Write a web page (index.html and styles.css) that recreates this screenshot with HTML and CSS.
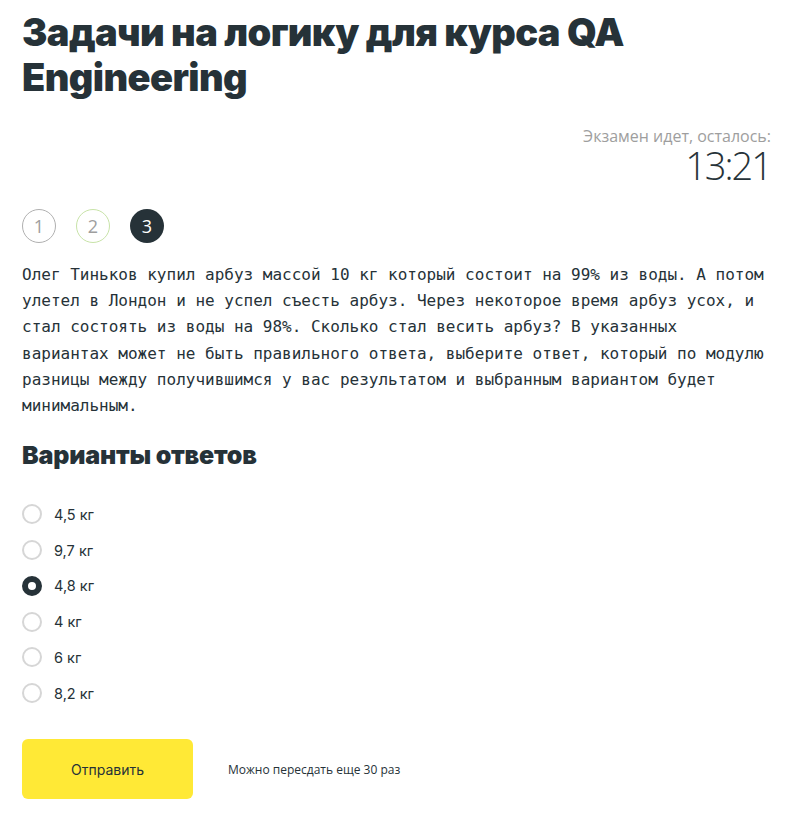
FILE: index.html
```html
<!DOCTYPE html>
<html lang="ru">
<head>
<meta charset="utf-8">
<title>Задачи на логику</title>
<link rel="stylesheet" href="styles.css">
</head>
<body>
<div class="page">
  <h1 class="title">Задачи на логику для курса QA Engineering</h1>
  <div class="timer">
    <div class="timer-label">Экзамен идет, осталось:</div>
    <div class="timer-value">13:21</div>
  </div>
  <div class="steps">
    <span class="step step-done">1</span>
    <span class="step step-ok">2</span>
    <span class="step step-current">3</span>
  </div>
  <p class="question">Олег Тиньков купил арбуз массой 10 кг который состоит на 99% из воды. А потом улетел в Лондон и не успел съесть арбуз. Через некоторое время арбуз усох, и стал состоять из воды на 98%. Сколько стал весить арбуз? В указанных вариантах может не быть правильного ответа, выберите ответ, который по модулю разницы между получившимся у вас результатом и выбранным вариантом будет минимальным.</p>
  <h2 class="subtitle">Варианты ответов</h2>
  <ul class="options">
    <li class="option"><span class="radio"></span><span class="option-text">4,5 кг</span></li>
    <li class="option"><span class="radio"></span><span class="option-text">9,7 кг</span></li>
    <li class="option"><span class="radio radio-checked"></span><span class="option-text">4,8 кг</span></li>
    <li class="option"><span class="radio"></span><span class="option-text">4 кг</span></li>
    <li class="option"><span class="radio"></span><span class="option-text">6 кг</span></li>
    <li class="option"><span class="radio"></span><span class="option-text">8,2 кг</span></li>
  </ul>
  <div class="actions">
    <button class="submit" type="button">Отправить</button>
    <span class="attempts">Можно пересдать еще 30 раз</span>
  </div>
</div>
</body>
</html>
```

FILE: styles.css
```css
* { box-sizing: border-box; }
html, body { margin: 0; padding: 0; background: #fff; }
body { color: #263238; font-family: "Open Sans", "Liberation Sans", sans-serif; }
.page { padding: 10px 14px 0 22px; }
.title {
  margin: 0;
  font-family: "Inter", "Lato", sans-serif;
  font-weight: 900;
  font-size: 38px;
  line-height: 45px;
  letter-spacing: -0.6px;
  color: #263238;
  max-width: 640px;
}
.timer { text-align: right; margin-top: 28px; padding-right: 2px; }
.timer-label { font-size: 16px; line-height: 16px; color: #9e9e9e; }
.timer-value { font-size: 38px; line-height: 38px; font-weight: 300; color: #263238; letter-spacing: -2px; margin-top: 2px; }
.steps { display: flex; gap: 20px; margin-top: 25px; }
.step {
  width: 34px; height: 34px; border-radius: 50%;
  display: flex; align-items: center; justify-content: center;
  font-size: 18px; color: #9e9e9e;
}
.step-done { border: 1px solid #b0b0b0; }
.step-ok { border: 1px solid #c8e3a8; }
.step-current { background: #263238; color: #fff; }
.question {
  margin: 19px 0 0;
  font-family: "DejaVu Sans Mono", monospace;
  font-size: 16px;
  line-height: 26.2px;
  color: #263238;
}
.subtitle {
  margin: 21px 0 0;
  font-family: "Inter", "Lato", sans-serif;
  font-weight: 900;
  font-size: 25px;
  line-height: 30px;
  letter-spacing: -0.2px;
}
.options { list-style: none; margin: 34px 0 0; padding: 0; display: flex; flex-direction: column; gap: 15.8px; }
.option { display: flex; align-items: center; gap: 12px; height: 20px; }
.radio { width: 20px; height: 20px; border-radius: 50%; border: 2px solid #d6d6d6; flex: none; }
.radio-checked { border: 6px solid #263238; }
.option-text { font-family: "Inter", sans-serif; font-size: 14.5px; color: #263238; }
.actions { display: flex; align-items: center; gap: 35px; margin-top: 36px; }
.submit {
  width: 171px; height: 60px; border: 0; border-radius: 6px;
  background: #ffe936; color: #263238;
  font-family: "Inter", sans-serif; font-size: 14px; cursor: pointer;
}
.attempts { font-size: 12px; color: #263238; }
```
